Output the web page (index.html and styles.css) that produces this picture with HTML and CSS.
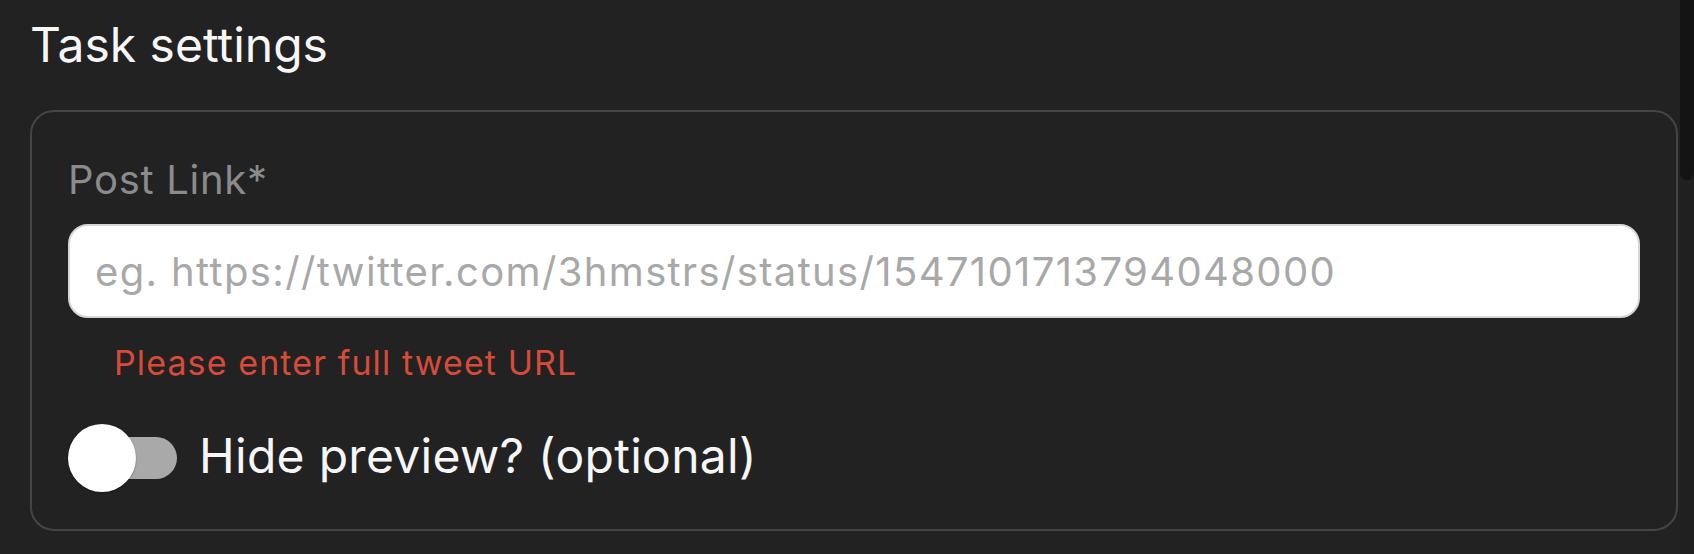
FILE: index.html
```html
<!DOCTYPE html>
<html lang="en">
<head>
<meta charset="utf-8">
<title>Task settings</title>
<link rel="stylesheet" href="styles.css">
</head>
<body>
<div class="app">
  <main class="main">
    <h2 class="title">Task settings</h2>
    <section class="card">
      <label class="field-label" for="post-link">Post Link*</label>
      <input id="post-link" class="text-input" type="text" placeholder="eg. https://twitter.com/3hmstrs/status/1547101713794048000">
      <p class="error">Please enter full tweet URL</p>
      <label class="toggle-row">
        <span class="switch">
          <span class="track"></span>
          <span class="knob"></span>
        </span>
        <span class="toggle-label">Hide preview? (optional)</span>
      </label>
    </section>
  </main>
  <div class="scrollbar"><div class="thumb"></div></div>
</div>
</body>
</html>
```

FILE: styles.css
```css
* { box-sizing: border-box; }
html, body { margin: 0; padding: 0; }
body {
  background: #222222;
  font-family: "Inter", "Noto Sans", sans-serif;
  color: #f4f4f4;
  height: 554px;
  overflow: hidden;
}
.app {
  display: flex;
  height: 554px;
}
.main {
  flex: 1;
  padding: 16px 2px 0 30px;
}
.scrollbar {
  width: 14px;
  background: #202020;
}
.thumb {
  height: 180px;
  background: #141414;
  border-radius: 0 0 7px 7px;
}
.title {
  margin: 0;
  font-size: 48px;
  font-weight: 400;
  line-height: 58px;
  color: #f6f6f6;
}
.card {
  margin-top: 36px;
  border: 2px solid #454545;
  border-radius: 24px;
  height: 421px;
  padding: 44px 36px 0 36px;
  display: flex;
  flex-direction: column;
}
.field-label {
  font-size: 40px;
  line-height: 48px;
  letter-spacing: 0.7px;
  color: #8b8b8e;
}
.text-input {
  margin-top: 20px;
  width: 1572px;
  height: 94px;
  border: 2px solid #d6d6d6;
  border-radius: 20px;
  background: #ffffff;
  padding: 0 0 0 25px;
  font-family: "Inter", "Noto Sans", sans-serif;
  font-size: 40px;
  letter-spacing: 1.36px;
  color: #333;
  outline: none;
}
.text-input::placeholder {
  color: #a8a8a8;
  opacity: 1;
}
.error {
  margin: 24px 0 0 46px;
  font-size: 34px;
  line-height: 41px;
  letter-spacing: 1.1px;
  color: #d84a39;
}
.toggle-row {
  margin-top: 41px;
  display: flex;
  align-items: center;
  gap: 22px;
}
.switch {
  position: relative;
  width: 109px;
  height: 68px;
  flex: none;
}
.track {
  position: absolute;
  left: 5px;
  right: 0;
  top: 13px;
  height: 42px;
  border-radius: 21px;
  background: #a9a9a9;
}
.knob {
  position: absolute;
  left: 0;
  top: 0;
  width: 68px;
  height: 68px;
  border-radius: 50%;
  background: #ffffff;
  box-shadow: 0 1px 2px rgba(0,0,0,0.3);
}
.toggle-label {
  font-size: 48px;
  line-height: 58px;
  letter-spacing: 0.3px;
  color: #f6f6f6;
  margin-top: -5px;
}
```
